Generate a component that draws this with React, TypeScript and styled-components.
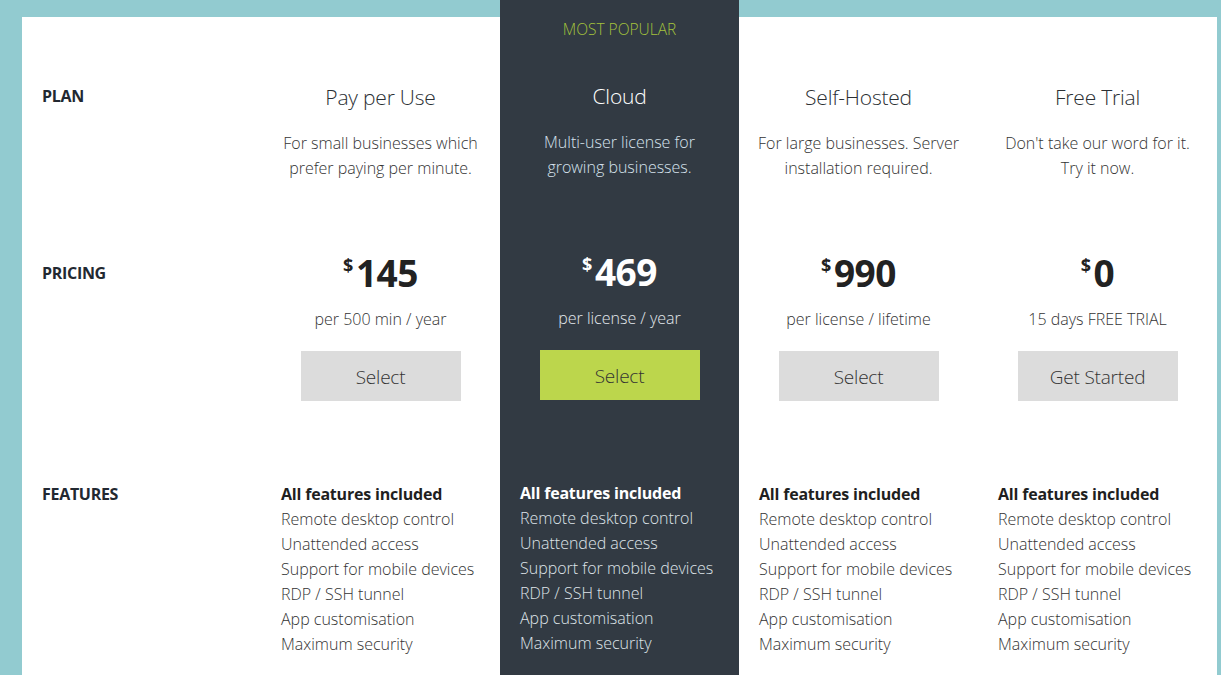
import React from "react";
import styled, { createGlobalStyle } from "styled-components";

const Global = createGlobalStyle`
  html, body { margin: 0; padding: 0; background: #92cbd0; }
  body { font-family: "Open Sans", "Liberation Sans", sans-serif; overflow: hidden; }
  * { box-sizing: border-box; }
`;

const Page = styled.div`
  padding: 17px 4px 0 22px;
  min-height: 675px;
`;

const Panel = styled.div`
  background: #ffffff;
  display: grid;
  grid-template-columns: repeat(5, 239px);
  min-height: 700px;
`;

const Column = styled.div<{ $featured?: boolean }>`
  display: flex;
  flex-direction: column;
  background: ${(p) => (p.$featured ? "#323a43" : "transparent")};
  margin-top: ${(p) => (p.$featured ? "-18px" : "0")};
  text-align: center;
  color: ${(p) => (p.$featured ? "#e4e9ee" : "#333333")};
`;

const LabelColumn = styled.div`
  display: flex;
  flex-direction: column;
  padding-left: 20px;
`;

const Ribbon = styled.div`
  padding-top: 20px;
  height: 40px;
  line-height: 20px;
  font-size: 15.5px;
  font-weight: 300;
  color: #a4c23c;
`;

const PlanSection = styled.div<{ $featured?: boolean }>`
  height: ${(p) => (p.$featured ? "190px" : "213px")};
  padding-top: ${(p) => (p.$featured ? "42px" : "65px")};
`;

const PricingSection = styled.div<{ $align?: string }>`
  height: 230px;
  padding-top: 20px;
  display: flex;
  flex-direction: column;
  align-items: ${(p) => p.$align ?? "center"};
`;

const FeaturesSection = styled.div`
  padding-top: 22px;
  padding-bottom: 40px;
`;

const Label = styled.div<{ $lh: number; $shift?: number }>`
  font-size: 16px;
  font-weight: 700;
  color: #222831;
  line-height: ${(p) => p.$lh}px;
  margin-top: ${(p) => p.$shift ?? 0}px;
  letter-spacing: -0.3px;
`;

const Title = styled.div<{ $featured?: boolean }>`
  font-size: 21px;
  font-weight: 300;
  line-height: 30px;
  color: ${(p) => (p.$featured ? "#ffffff" : "#2b2f33")};
  letter-spacing: -0.2px;
`;

const Description = styled.p<{ $featured?: boolean }>`
  margin: 19px 0 0;
  font-size: 16px;
  font-weight: 300;
  line-height: 25px;
  color: ${(p) => (p.$featured ? "#d7e3ee" : "#333333")};
`;

const Price = styled.div<{ $featured?: boolean }>`
  display: flex;
  align-items: flex-start;
  justify-content: center;
  font-size: 37px;
  font-weight: 700;
  line-height: 46px;
  color: ${(p) => (p.$featured ? "#ffffff" : "#222222")};
  letter-spacing: -0.5px;
`;

const Currency = styled.span`
  font-size: 18px;
  line-height: 18px;
  font-weight: 700;
  margin-top: 6px;
  margin-right: 3px;
`;

const Period = styled.div<{ $featured?: boolean }>`
  margin-top: 11px;
  font-size: 16px;
  font-weight: 300;
  line-height: 25px;
  color: ${(p) => (p.$featured ? "#e4e9ee" : "#333333")};
`;

const Button = styled.button<{ $featured?: boolean }>`
  margin-top: 19px;
  width: 160px;
  height: 50px;
  border: none;
  padding: 2px 0 0;
  background: ${(p) => (p.$featured ? "#bcd64c" : "#dcdcdc")};
  color: #333333;
  font-family: inherit;
  font-size: 19px;
  font-weight: 300;
  cursor: pointer;
  letter-spacing: -0.2px;
`;

const FeatureList = styled.ul`
  list-style: none;
  margin: 0;
  padding: 0 0 0 20px;
  text-align: left;
`;

const Feature = styled.li<{ $strong?: boolean; $featured?: boolean }>`
  font-size: 16px;
  line-height: 25px;
  font-weight: ${(p) => (p.$strong ? 700 : 300)};
  color: ${(p) =>
    p.$featured ? (p.$strong ? "#ffffff" : "#dfe4e9") : p.$strong ? "#1f1f1f" : "#333333"};
  letter-spacing: ${(p) => (p.$strong ? "-0.2px" : "0")};
  white-space: nowrap;
`;

type Plan = {
  name: string;
  desc: [string, string];
  price: string;
  period: string;
  cta: string;
  featured?: boolean;
};

const plans: Plan[] = [
  {
    name: "Pay per Use",
    desc: ["For small businesses which", "prefer paying per minute."],
    price: "145",
    period: "per 500 min / year",
    cta: "Select",
  },
  {
    name: "Cloud",
    desc: ["Multi-user license for", "growing businesses."],
    price: "469",
    period: "per license / year",
    cta: "Select",
    featured: true,
  },
  {
    name: "Self-Hosted",
    desc: ["For large businesses. Server", "installation required."],
    price: "990",
    period: "per license / lifetime",
    cta: "Select",
  },
  {
    name: "Free Trial",
    desc: ["Don't take our word for it.", "Try it now."],
    price: "0",
    period: "15 days FREE TRIAL",
    cta: "Get Started",
  },
];

const features = [
  "Remote desktop control",
  "Unattended access",
  "Support for mobile devices",
  "RDP / SSH tunnel",
  "App customisation",
  "Maximum security",
];

export default function App() {
  return (
    <>
      <Global />
      <Page>
        <Panel>
          <LabelColumn>
            <PlanSection>
              <Label $lh={30} $shift={-1}>PLAN</Label>
            </PlanSection>
            <PricingSection $align="flex-start">
              <Label $lh={46}>PRICING</Label>
            </PricingSection>
            <FeaturesSection>
              <Label $lh={25}>FEATURES</Label>
            </FeaturesSection>
          </LabelColumn>
          {plans.map((p) => (
            <Column key={p.name} $featured={p.featured}>
              {p.featured && <Ribbon>MOST POPULAR</Ribbon>}
              <PlanSection $featured={p.featured}>
                <Title $featured={p.featured}>{p.name}</Title>
                <Description $featured={p.featured}>
                  {p.desc[0]}
                  <br />
                  {p.desc[1]}
                </Description>
              </PlanSection>
              <PricingSection>
                <Price $featured={p.featured}>
                  <Currency>$</Currency>
                  {p.price}
                </Price>
                <Period $featured={p.featured}>{p.period}</Period>
                <Button $featured={p.featured}>{p.cta}</Button>
              </PricingSection>
              <FeaturesSection>
                <FeatureList>
                  <Feature $strong $featured={p.featured}>
                    All features included
                  </Feature>
                  {features.map((f) => (
                    <Feature key={f} $featured={p.featured}>
                      {f}
                    </Feature>
                  ))}
                </FeatureList>
              </FeaturesSection>
            </Column>
          ))}
        </Panel>
      </Page>
    </>
  );
}
